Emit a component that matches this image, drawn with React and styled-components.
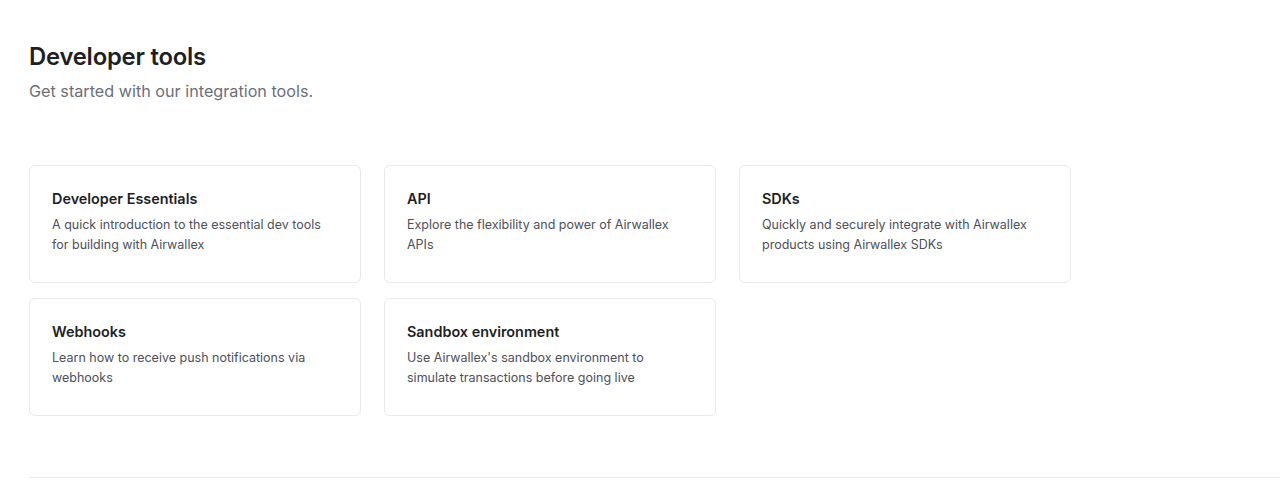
import React from 'react';
import styled, { createGlobalStyle } from 'styled-components';

const GlobalStyle = createGlobalStyle`
    body {
        margin: 0;
        background: #fff;
        font-family: Inter, "Noto Sans", sans-serif;
    }
`;

const Page = styled.div`
    padding: 43px 0 0 29px;
`;

const Title = styled.h1`
    margin: 0;
    font-size: 23.8px;
    line-height: 28px;
    font-weight: 600;
    color: #1d1f24;
    letter-spacing: -0.2px;
`;

const Subtitle = styled.p`
    margin: 8px 0 0;
    font-size: 16.2px;
    line-height: 24px;
    color: #6b6f78;
`;

const Grid = styled.div`
    display: grid;
    grid-template-columns: repeat(3, 332px);
    column-gap: 23px;
    row-gap: 15px;
    margin-top: 62px;
`;

const Card = styled.a`
    display: block;
    box-sizing: border-box;
    height: 118px;
    padding: 23px 22px;
    border: 1px solid #e8e9eb;
    border-radius: 6px;
    text-decoration: none;
`;

const CardTitle = styled.div`
    font-size: 14.4px;
    line-height: 20px;
    font-weight: 600;
    color: #1d1f24;
`;

const CardText = styled.div`
    margin-top: 6px;
    font-size: 12.5px;
    line-height: 20px;
    color: #4c5058;
    max-width: 280px;
`;

const Divider = styled.hr`
    margin: 61px 0 0;
    border: none;
    border-top: 1px solid #e8e9eb;
`;

const tools = [
    { title: 'Developer Essentials', text: 'A quick introduction to the essential dev tools for building with Airwallex' },
    { title: 'API', text: 'Explore the flexibility and power of Airwallex APIs' },
    { title: 'SDKs', text: 'Quickly and securely integrate with Airwallex products using Airwallex SDKs' },
    { title: 'Webhooks', text: 'Learn how to receive push notifications via webhooks' },
    { title: 'Sandbox environment', text: "Use Airwallex's sandbox environment to simulate transactions before going live" },
];

const App = () => (
    <Page>
        <GlobalStyle />
        <Title>Developer tools</Title>
        <Subtitle>Get started with our integration tools.</Subtitle>
        <Grid>
            {tools.map(tool => (
                <Card key={tool.title} href="#">
                    <CardTitle>{tool.title}</CardTitle>
                    <CardText>{tool.text}</CardText>
                </Card>
            ))}
        </Grid>
        <Divider />
    </Page>
);

export default App;
